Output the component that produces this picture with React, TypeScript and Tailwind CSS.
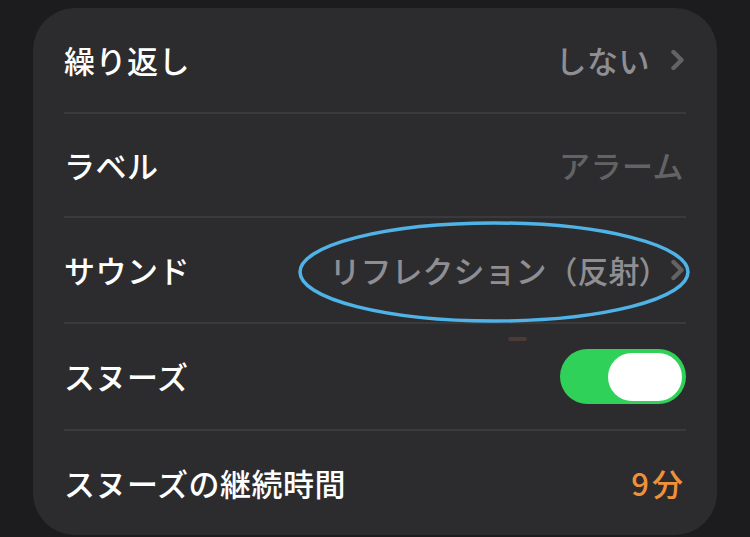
import React from "react";

const font = { fontFamily: '"Noto Sans CJK JP", "Noto Sans", sans-serif' };

function Chevron({ className = "" }: { className?: string }) {
  return (
    <svg width="16" height="22" viewBox="0 0 16 22" className={className}>
      <path d="M3.5 3 L11.5 11 L3.5 19" fill="none" stroke="#636366" strokeWidth="4.4" strokeLinecap="round" strokeLinejoin="round" />
    </svg>
  );
}

function Divider() {
  return <div className="h-[2px] bg-[#3a3a3c]" />;
}

export default function App() {
  return (
    <div className="w-[750px] h-[537px] bg-[#1c1c1e] overflow-hidden relative" style={font}>
      <div className="absolute left-[33px] top-[8px] w-[684px] h-[527px] rounded-[42px] bg-[#2c2c2e] px-[31px] flex flex-col text-[31px] font-medium tracking-[0.5px]">
        <div className="h-[104px] flex items-center justify-between">
          <span className="text-white">繰り返し</span>
          <span className="flex items-center gap-[20px] text-[#8e8e93]">
            <span>しない</span>
            <Chevron />
          </span>
        </div>
        <Divider />
        <div className="h-[102px] flex items-center justify-between">
          <span className="text-white">ラベル</span>
          <span className="text-[#636366] pr-[2px]">アラーム</span>
        </div>
        <Divider />
        <div className="h-[104px] flex items-center justify-between">
          <span className="text-white">サウンド</span>
          <span className="flex items-center gap-[15px] text-[#8e8e93]">
            <span className="tracking-normal">
              リフレクション（反射<span style={{ fontFeatureSettings: '"palt"' }}>）</span>
            </span>
            <Chevron />
          </span>
        </div>
        <Divider />
        <div className="h-[105px] flex items-center justify-between">
          <span className="text-white">スヌーズ</span>
          <div className="w-[126px] h-[55px] rounded-full bg-[#30d158] flex items-center justify-end pr-[4px]">
            <div className="w-[74px] h-[48px] rounded-full bg-white" />
          </div>
        </div>
        <Divider />
        <div className="h-[104px] flex items-center justify-between">
          <span className="text-white">スヌーズの継続時間</span>
          <span className="text-[#f0913a] tracking-[3px]">9分</span>
        </div>
      </div>
      <div className="absolute left-[508px] top-[337px] w-[19px] h-[4px] rounded-full bg-[#4a3b37]" />
      <svg className="absolute left-[296px] top-[220px]" width="396" height="104" viewBox="0 0 396 104">
        <ellipse cx="198" cy="52" rx="194" ry="49" fill="none" stroke="#4fb3e8" strokeWidth="3.5" />
      </svg>
    </div>
  );
}
